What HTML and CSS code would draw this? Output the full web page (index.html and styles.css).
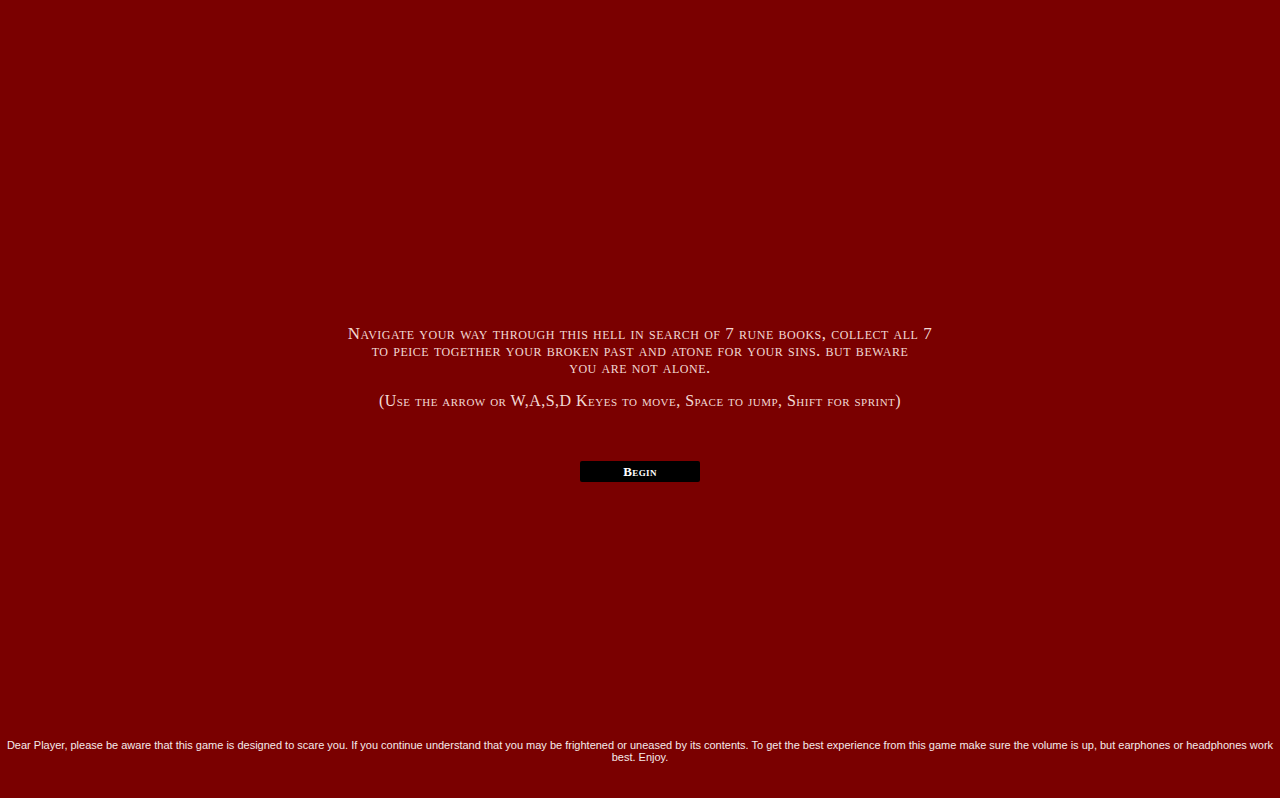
FILE: index.html
```html
<!DOCTYPE html>
<html lang="en">
<head>
    <meta charset="UTF-8">
    <meta name="viewport" content="width=device-width, initial-scale=1.0">
    <title>Rune Books</title>
    <link rel="stylesheet" href="styles.css">
</head>
<body>
    <div class="menu">
        <div class="intro">
            <p>Navigate your way through this hell in search of 7 rune books, collect all 7<br>
            to peice together your broken past and atone for your sins. but beware<br>
            you are not alone.</p>
            <p class="controls">(Use the arrow or W,A,S,D Keyes to move, Space to jump, Shift for sprint)</p>
        </div>
        <button class="begin-btn">Begin</button>
    </div>

    <footer class="warning">
        Dear Player, please be aware that this game is designed to scare you. If you continue understand that you may be frightened or uneased by its contents. To get the best experience from this game make sure the volume is up, but earphones or headphones work best. Enjoy.
    </footer>
</body>
</html>
```

FILE: styles.css
```css
body, html {
    margin: 0;
    padding: 0;
    height: 100%;
}

body {
    background-color: #7a0000;
    color: #f3dede;
    display: flex;
    flex-direction: column;
    overflow: hidden;
}

/* Ecran de depart */
.menu {
    flex: 1;
    display: flex;
    flex-direction: column;
    align-items: center;
    padding-top: 325px;
}

.intro {
    width: 660px;
    text-align: center;
    font-family: "Liberation Serif", serif;
    font-variant: small-caps;
    font-size: 17px;
    line-height: 17px;
    letter-spacing: 0.03em;
    color: #f2d9d4;
}

.intro p {
    margin: 0 0 16px 0;
}

.intro .controls {
    font-size: 16px;
    letter-spacing: 0.03em;
}

.begin-btn {
    margin-top: 36px;
    width: 120px;
    height: 21px;
    background: black;
    color: white;
    border: none;
    border-radius: 2px;
    font-family: "Liberation Serif", serif;
    font-variant: small-caps;
    font-weight: bold;
    font-size: 13px;
    letter-spacing: 0.03em;
    cursor: pointer;
}

.warning {
    padding: 0 4px 35px;
    text-align: center;
    font-family: "Liberation Sans", Arial, sans-serif;
    font-size: 11px;
    line-height: 12px;
    color: #f5eaea;
}
```
